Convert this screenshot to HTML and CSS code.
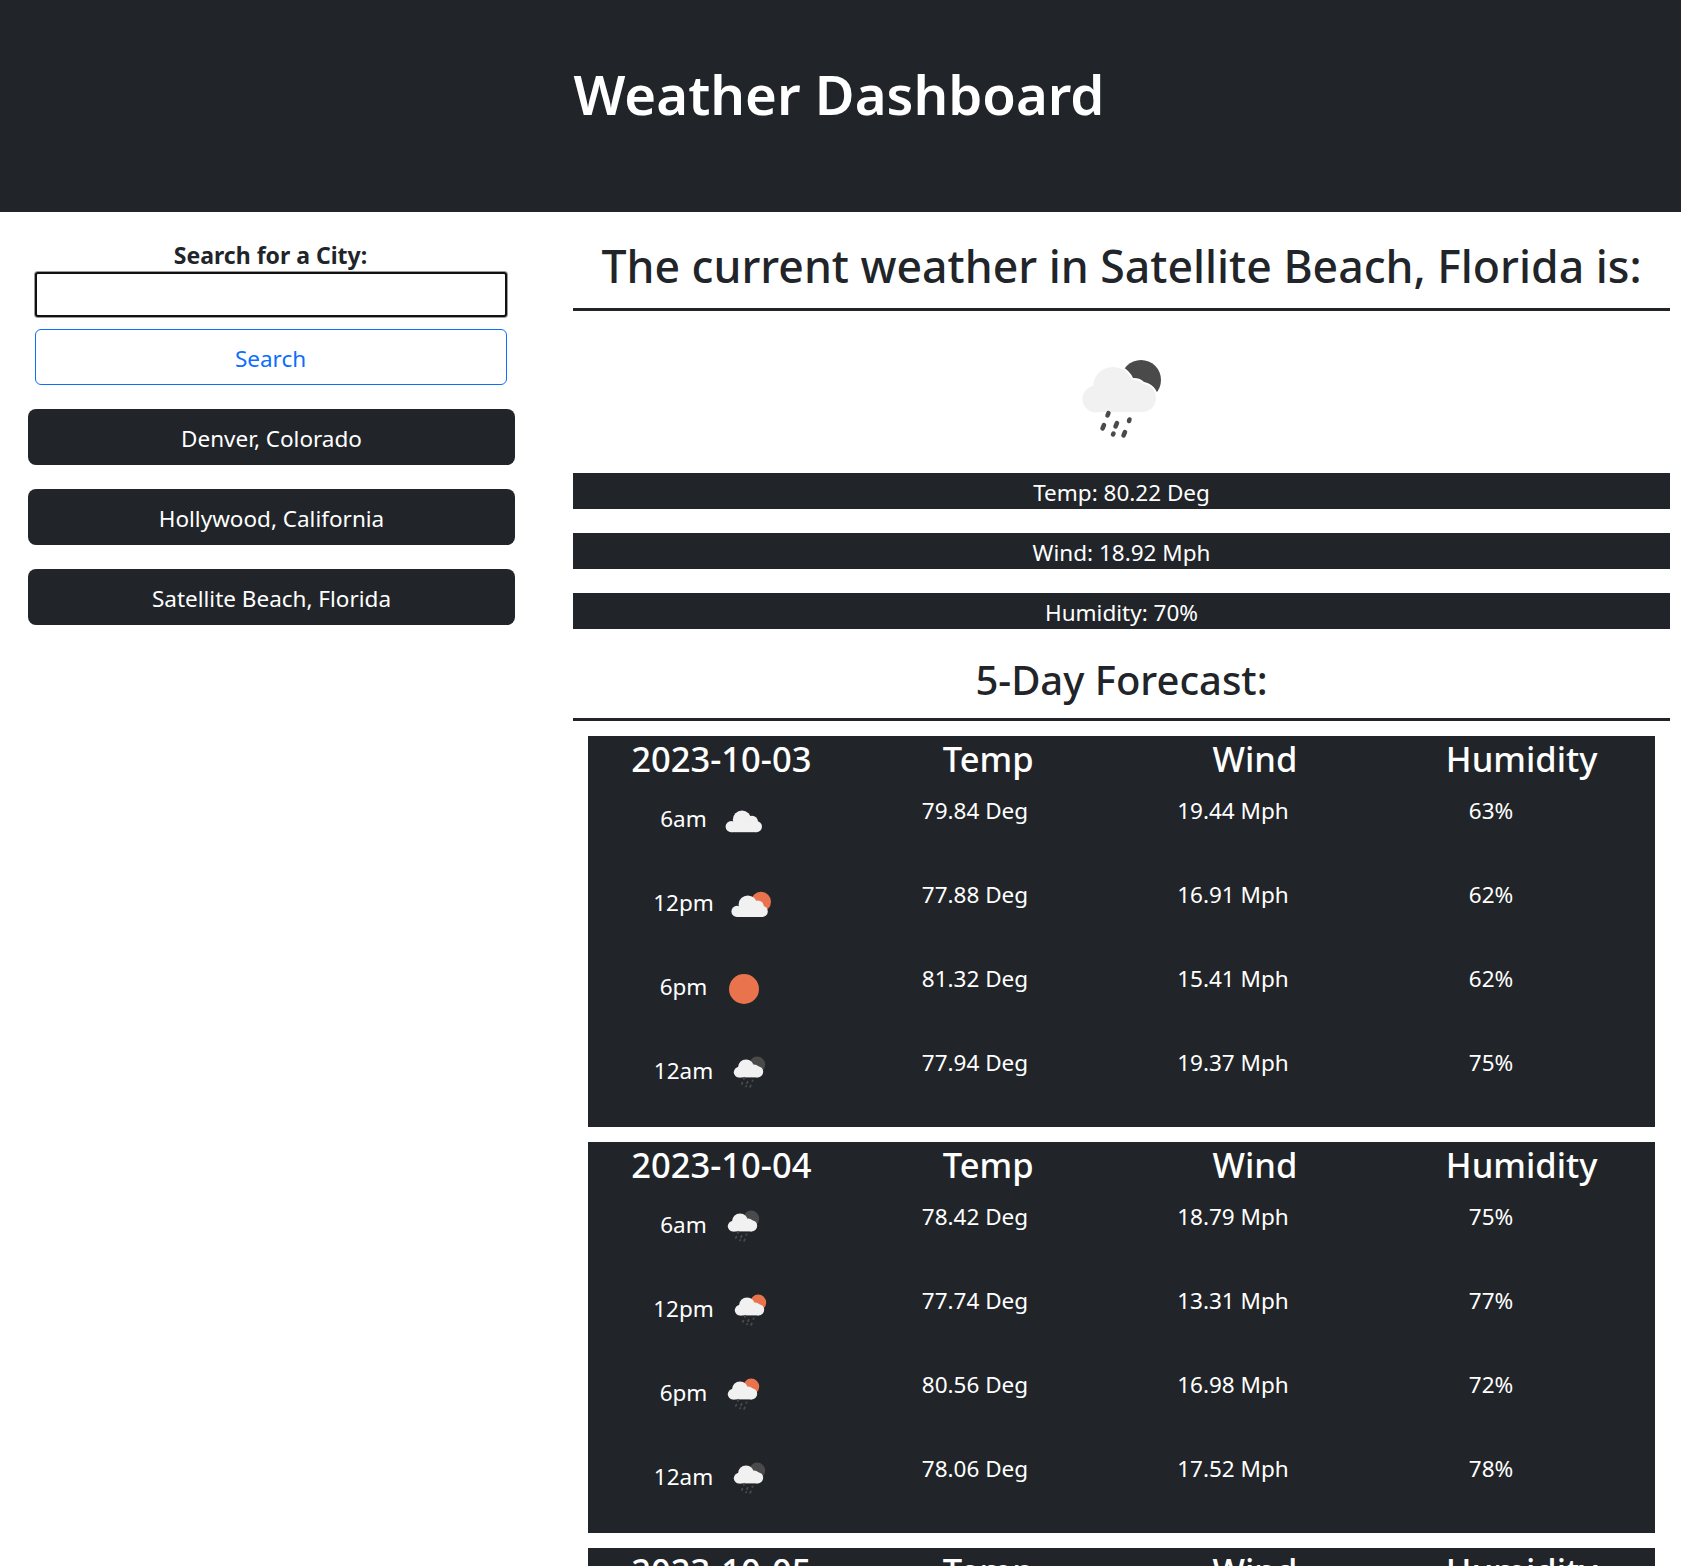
FILE: index.html
```html
<!DOCTYPE html>
<html lang="en">
<head>
<meta charset="utf-8">
<title>Weather Dashboard</title>
<link rel="stylesheet" href="styles.css">
</head>
<body>
<svg class="sprite" aria-hidden="true">
  <defs>
    <g id="cloud">
      <circle cx="41" cy="34" r="20"/><circle cx="24" cy="46" r="13.500"/><circle cx="62" cy="40" r="13"/><circle cx="70" cy="45" r="14"/>
      <rect x="24" y="38" width="46" height="21"/>
    </g>
    <g id="drops" class="drops">
      <path d="M36.500 60l-1 2.500M32 72l-1.500 3.500M45 70l-1.500 3.500M57.500 66.500l-.5 1.500M41.500 80.500l-.5 1M53 79l-1.500 3.500"/>
    </g>
    <g id="overcast">
      <circle cx="45" cy="47" r="23"/><circle cx="70" cy="52" r="15"/><circle cx="18" cy="64" r="14"/><circle cx="81" cy="64" r="14"/>
      <rect x="18" y="52" width="63" height="26"/>
    </g>
    <g id="rain-night" transform="translate(-1 2)"><circle class="moon" cx="69" cy="27" r="20"/><use href="#cloud" class="cloud-fill"/><use href="#drops"/></g>
    <g id="rain-day" transform="translate(-1 2)"><circle class="sun" cx="69" cy="27" r="20"/><use href="#cloud" class="cloud-fill"/><use href="#drops"/></g>
    <g id="clouds-day"><circle class="sun" cx="75" cy="42" r="25"/><use href="#overcast" class="cloud-fill" x="-3" y="2"/></g>
  </defs>
</svg>

<header class="site-header"><h1>Weather Dashboard</h1></header>

<div class="layout">
  <aside class="sidebar">
    <form class="search">
      <label class="search-label" for="city">Search for a City:</label>
      <input class="search-input" id="city" type="text">
      <button class="search-button" type="button">Search</button>
    </form>
    <button class="city-button" type="button">Denver, Colorado</button>
    <button class="city-button" type="button">Hollywood, California</button>
    <button class="city-button" type="button">Satellite Beach, Florida</button>
  </aside>

  <main class="content">
    <h2 class="current-title">The current weather in Satellite Beach, Florida is:</h2>
    <div class="current-icon">
      <svg class="icon-large" viewBox="0 0 100 100" aria-hidden="true">
        <circle class="moon" cx="69" cy="27" r="20"/>
        <use href="#cloud" class="cloud-halo"/>
        <use href="#cloud" class="cloud-fill"/>
        <use href="#drops"/>
      </svg>
    </div>
    <p class="stat-bar">Temp: 80.22 Deg</p>
    <p class="stat-bar">Wind: 18.92 Mph</p>
    <p class="stat-bar">Humidity: 70%</p>
    <h3 class="forecast-title">5-Day Forecast:</h3>

    <section class="day-card">
      <div class="day-head"><span>2023-10-03</span><span>Temp</span><span>Wind</span><span>Humidity</span></div>
      <div class="day-rows">
        <div class="day-row"><div class="time-cell"><span class="time">6am</span><svg class="icon-small" viewBox="0 0 100 100"><use href="#overcast" class="cloud-fill"/></svg></div><span>79.84 Deg</span><span>19.44 Mph</span><span>63%</span></div>
        <div class="day-row"><div class="time-cell"><span class="time">12pm</span><svg class="icon-small" viewBox="0 0 100 100"><use href="#clouds-day"/></svg></div><span>77.88 Deg</span><span>16.91 Mph</span><span>62%</span></div>
        <div class="day-row"><div class="time-cell"><span class="time">6pm</span><svg class="icon-small" viewBox="0 0 100 100"><circle class="sun" cx="50" cy="50" r="37.500"/></svg></div><span>81.32 Deg</span><span>15.41 Mph</span><span>62%</span></div>
        <div class="day-row"><div class="time-cell"><span class="time">12am</span><svg class="icon-small" viewBox="0 0 100 100"><use href="#rain-night"/></svg></div><span>77.94 Deg</span><span>19.37 Mph</span><span>75%</span></div>
      </div>
    </section>

    <section class="day-card">
      <div class="day-head"><span>2023-10-04</span><span>Temp</span><span>Wind</span><span>Humidity</span></div>
      <div class="day-rows">
        <div class="day-row"><div class="time-cell"><span class="time">6am</span><svg class="icon-small" viewBox="0 0 100 100"><use href="#rain-night"/></svg></div><span>78.42 Deg</span><span>18.79 Mph</span><span>75%</span></div>
        <div class="day-row"><div class="time-cell"><span class="time">12pm</span><svg class="icon-small" viewBox="0 0 100 100"><use href="#rain-day"/></svg></div><span>77.74 Deg</span><span>13.31 Mph</span><span>77%</span></div>
        <div class="day-row"><div class="time-cell"><span class="time">6pm</span><svg class="icon-small" viewBox="0 0 100 100"><use href="#rain-day"/></svg></div><span>80.56 Deg</span><span>16.98 Mph</span><span>72%</span></div>
        <div class="day-row"><div class="time-cell"><span class="time">12am</span><svg class="icon-small" viewBox="0 0 100 100"><use href="#rain-night"/></svg></div><span>78.06 Deg</span><span>17.52 Mph</span><span>78%</span></div>
      </div>
    </section>

    <section class="day-card">
      <div class="day-head"><span>2023-10-05</span><span>Temp</span><span>Wind</span><span>Humidity</span></div>
    </section>
  </main>
</div>
</body>
</html>
```
FILE: styles.css
```css
* { box-sizing: border-box; }

html { overflow: hidden; height: 100%; }

body {
  margin: 0;
  height: 100%;
  overflow: hidden;
  background: #fff;
  color: #212529;
  font-family: "Noto Sans", "Open Sans", sans-serif;
  font-size: 22.5px;
  line-height: 36px;
}

.sprite { position: absolute; width: 0; height: 0; }

.site-header {
  height: 212px;
  background: #212529;
  color: #fff;
  text-align: center;
  padding: 58px 3px 0 0;
}

.site-header h1 {
  margin: 0;
  font-size: 54.5px;
  font-weight: 600;
  line-height: 72px;
}

.layout {
  display: grid;
  grid-template-columns: 543px 1097px;
  column-gap: 30px;
}

.sidebar {
  display: flex;
  flex-direction: column;
  align-items: center;
  padding-top: 25px;
}

.search {
  display: flex;
  flex-direction: column;
  align-items: stretch;
  width: 472px;
  margin-bottom: 24px;
  position: relative;
  left: -1px;
}

.search-label {
  text-align: center;
  font-size: 23px;
  font-weight: 700;
  height: 35px;
}

.search-input {
  height: 45px;
  margin-bottom: 12px;
  border: 2px solid #111;
  border-radius: 3px;
  box-shadow: 0 0 0 1px #999;
  background: #fff;
}

.search-button,
.city-button {
  font: inherit;
  height: 56px;
  padding: 3px 0 0;
  cursor: pointer;
}

.search-button {
  border: 1px solid #0d6efd;
  border-radius: 6px;
  background: #fff;
  color: #0d6efd;
}

.city-button {
  width: 487px;
  margin-bottom: 24px;
  border: 0;
  border-radius: 8px;
  background: #212529;
  color: #fff;
}

.content { display: flex; flex-direction: column; }

.current-title {
  margin: 0;
  height: 99px;
  padding-top: 23px;
  border-bottom: 3px solid #212529;
  text-align: center;
  font-size: 44.6px;
  font-weight: 500;
  line-height: 62px;
}

.current-icon {
  display: flex;
  justify-content: center;
  padding: 42px 0 20px;
}

.icon-large { display: block; width: 100px; height: 100px; }

.stat-bar {
  margin: 0 0 24px;
  height: 36px;
  padding-top: 2px;
  background: #212529;
  color: #fff;
  text-align: center;
}

.forecast-title {
  margin: -4px 0 15px;
  height: 72px;
  border-bottom: 3px solid #212529;
  text-align: center;
  font-size: 40px;
  font-weight: 500;
  line-height: 62px;
}

.day-card {
  flex: none;
  margin: 0 15px 15px;
  background: #212529;
  color: #fff;
}

.day-head {
  display: grid;
  grid-template-columns: repeat(4, 1fr);
  height: 58px;
  text-align: center;
  font-size: 34.5px;
  font-weight: 500;
  line-height: 46px;
}

.day-rows {
  display: flex;
  flex-direction: column;
  gap: 37px;
  padding-bottom: 34px;
}

.day-row {
  display: grid;
  grid-template-columns: repeat(4, 258px);
  height: 47px;
  text-align: center;
  line-height: 34px;
}

.time-cell {
  display: flex;
  justify-content: center;
  align-items: center;
  gap: 17px;
  height: 40px;
  margin-top: 7px;
  padding-right: 10px;
}

.time { position: relative; top: -2px; }

.icon-small { display: block; width: 40px; height: 40px; flex: none; }

.cloud-fill { fill: #f1f1f1; }
.cloud-halo { fill: #fff; stroke: #fff; stroke-width: 4; }
.moon { fill: #4a4a4a; }
.sun { fill: #e9734d; }
.drops { fill: none; stroke: #4a4a4a; stroke-width: 4.500; stroke-linecap: round; }
```
